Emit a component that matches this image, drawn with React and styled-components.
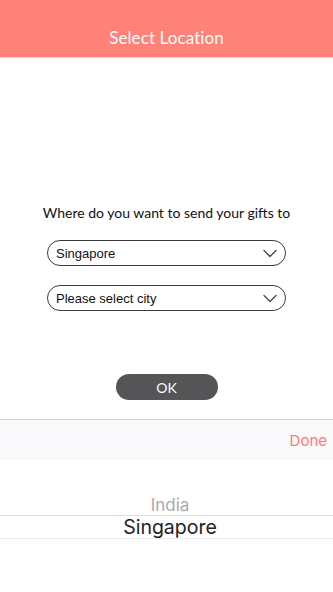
import React from 'react';
import styled, { createGlobalStyle } from 'styled-components';

const GlobalStyle = createGlobalStyle`
  html, body {
    margin: 0;
    padding: 0;
    background: #ffffff;
  }
  * {
    box-sizing: border-box;
  }
`

const Screen = styled.div`
  width: 333px;
  height: 592px;
  display: flex;
  flex-direction: column;
  overflow: hidden;
  background: #ffffff;
`

const Header = styled.header`
  height: 58px;
  flex-shrink: 0;
  background: #ff8278;
  border-bottom: 1px solid #dcdcdc;
  display: flex;
  align-items: flex-end;
  justify-content: center;
  padding-bottom: 9px;
  color: #ffffff;
  font-family: "Lato", "Open Sans", sans-serif;
  font-size: 17px;
  letter-spacing: 0.1px;
`

const Main = styled.main`
  height: 361px;
  flex-shrink: 0;
  display: flex;
  flex-direction: column;
  align-items: center;
  padding-top: 146px;
`

const Question = styled.div`
  font-family: "Lato", "Open Sans", sans-serif;
  font-size: 14px;
  line-height: 18px;
  color: #111111;
  margin-bottom: 18px;
`

const Select = styled.div`
  width: 239px;
  height: 26px;
  border: 1px solid #3a3a3a;
  border-radius: 13px;
  display: flex;
  align-items: center;
  justify-content: space-between;
  padding: 0 8px 0 8px;
  margin-bottom: ${p => p.$gap || 0}px;
  font-family: "Liberation Sans", Arial, sans-serif;
  font-size: 13px;
  color: #111111;
`

const Chevron = () => (
  <svg width="14" height="9" viewBox="0 0 14 9">
    <polyline points="1,1.5 7,7.5 13,1.5" fill="none" stroke="#4a4a4a" strokeWidth="1.4" strokeLinecap="round" strokeLinejoin="round" />
  </svg>
)

const OkButton = styled.button`
  width: 102px;
  height: 26px;
  border: none;
  border-radius: 13px;
  background: #555457;
  color: #ffffff;
  font-family: "Lato", "Open Sans", sans-serif;
  font-size: 14px;
  padding: 0;
`

const Toolbar = styled.div`
  height: 41px;
  flex-shrink: 0;
  border-top: 1px solid #d4d4d6;
  background: #f9f8fb;
  display: flex;
  align-items: center;
  justify-content: flex-end;
  padding-right: 6px;
`

const DoneButton = styled.span`
  font-family: "Inter", "Roboto", sans-serif;
  font-size: 15px;
  color: #ff7d72;
`

const Picker = styled.div`
  flex: 1;
  display: flex;
  flex-direction: column;
  padding-top: 35px;
  background: #ffffff;
`

const PickerRow = styled.div`
  height: ${p => (p.$selected ? 24 : 20)}px;
  display: flex;
  align-items: center;
  justify-content: center;
  padding-left: 7px;
  font-family: "Inter", "Roboto", sans-serif;
  font-size: ${p => (p.$selected ? 19.5 : 17)}px;
  color: ${p => (p.$selected ? '#222222' : '#a9a9ab')};
  border-top: ${p => (p.$selected ? '1px solid #dedede' : 'none')};
  border-bottom: ${p => (p.$selected ? '1px solid #ececec' : 'none')};
`

export default function App() {
  return (
    <Screen>
      <GlobalStyle />
      <Header>Select Location</Header>
      <Main>
        <Question>Where do you want to send your gifts to</Question>
        <Select $gap={19}>
          <span>Singapore</span>
          <Chevron />
        </Select>
        <Select $gap={63}>
          <span>Please select city</span>
          <Chevron />
        </Select>
        <OkButton>OK</OkButton>
      </Main>
      <Toolbar>
        <DoneButton>Done</DoneButton>
      </Toolbar>
      <Picker>
        <PickerRow>India</PickerRow>
        <PickerRow $selected>Singapore</PickerRow>
      </Picker>
    </Screen>
  )
}
